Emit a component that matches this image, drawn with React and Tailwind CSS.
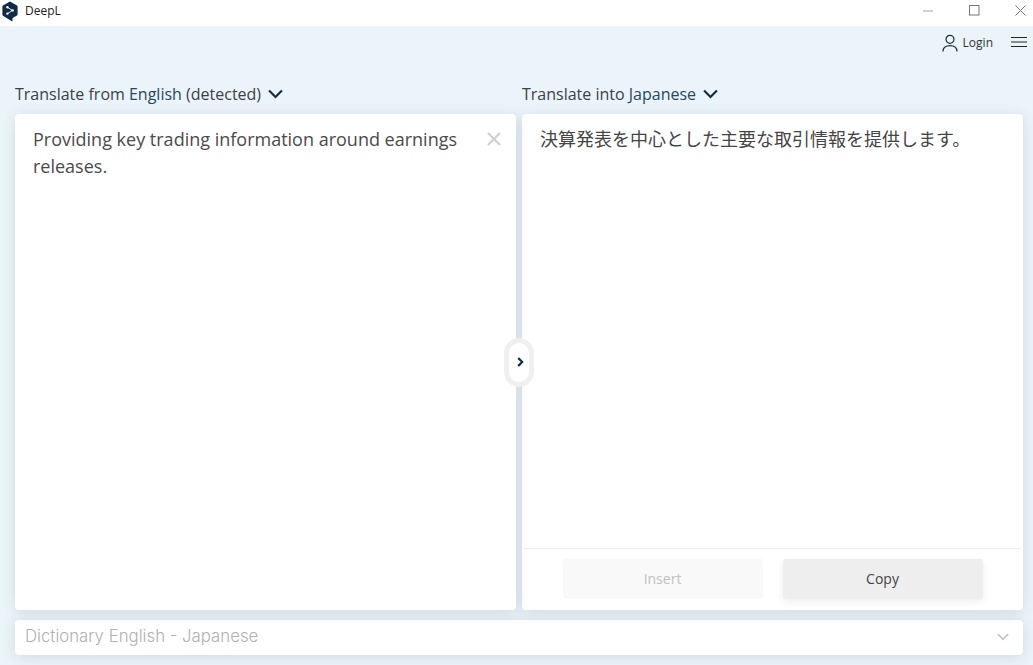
import React from "react";

const Chevron = ({ className = "" }) => (
  <svg className={className} viewBox="0 0 14 9" fill="none" stroke="currentColor" strokeWidth="2">
    <path d="M1 1.2 L7 7.2 L13 1.2" />
  </svg>
);

const Logo = () => (
  <svg width="16" height="21" viewBox="0 0 16 21" className="shrink-0 mt-[1px]">
    <path d="M8 0.5 L15 4.5 Q15.6 4.9 15.6 5.6 L15.6 13.2 Q15.6 14 15 14.4 L10.6 17 L10.4 20.6 L7 18.6 L1 14.8 Q0.4 14.4 0.4 13.6 L0.4 5.6 Q0.4 4.9 1 4.5 Z" fill="#0f2b46" />
    <circle cx="5.4" cy="6.3" r="1.2" fill="#fff" />
    <circle cx="5.4" cy="12.6" r="1.2" fill="#fff" />
    <circle cx="10.6" cy="9.4" r="1.2" fill="#fff" />
    <path d="M5.4 6.3 L10.6 9.4 L5.4 12.6" stroke="#fff" strokeWidth="0.9" fill="none" />
  </svg>
);

export default function App() {
  return (
    <div className="w-[1033px] h-[665px] overflow-hidden flex flex-col bg-[#ebf4fa] text-[#333] font-['Open_Sans',sans-serif]">
      <header className="h-[26px] bg-white flex items-start pl-[2px] shrink-0">
        <Logo />
        <span className="ml-[7px] mt-[5px] text-[12px] text-[#222] leading-none">DeepL</span>
        <div className="ml-auto mt-[5px] flex items-center text-[#8a8a8a]">
          <svg width="11" height="2" className="mr-[35px]"><path d="M0 1h10" stroke="#a8a8a8" strokeWidth="1" /></svg>
          <svg width="11" height="11" className="mr-[35px]"><rect x="0.5" y="0.5" width="9.5" height="9.5" fill="none" stroke="#777" /></svg>
          <svg width="11" height="11" className="mr-[7px]"><path d="M0.5 0.5L10.5 10.5M10.5 0.5L0.5 10.5" stroke="#777" /></svg>
        </div>
      </header>

      <div className="h-[34px] flex items-center justify-end shrink-0 pr-[6px]">
        <svg width="16" height="18" viewBox="0 0 16 18" fill="none" stroke="#1c2b3a" strokeWidth="1.2" className="mb-[1px]">
          <circle cx="8" cy="5.3" r="4" />
          <path d="M1 17.5 Q1 11.6 8 11.6 Q15 11.6 15 17.5" />
        </svg>
        <span className="ml-[5px] text-[12px] text-[#333] leading-none">Login</span>
        <svg width="16" height="12" className="ml-[18px] mb-[2px]" stroke="#222" strokeWidth="1.2">
          <path d="M0 1.5h16M0 6h16M0 10.5h16" />
        </svg>
      </div>

      <div className="flex gap-[6px] pl-[15px] pr-[10px] shrink-0">
        <div className="w-[501px] h-[54px] flex items-center pt-[14px] pb-0 text-[16px] text-[#3b4148] leading-none">
          <span>Translate from&nbsp;</span>
          <span className="text-[#27475f]">English</span>
          <span>&nbsp;(detected)</span>
          <Chevron className="w-[15px] h-[10px] ml-[7px] text-[#0f2b46]" />
        </div>
        <div className="w-[501px] h-[54px] flex items-center pt-[14px] text-[16px] text-[#3b4148] leading-none">
          <span>Translate into&nbsp;</span>
          <span className="text-[#27475f]">Japanese</span>
          <Chevron className="w-[15px] h-[10px] ml-[7px] text-[#0f2b46]" />
        </div>
      </div>

      <main className="relative flex gap-[6px] pl-[15px] pr-[10px] h-[496px] shrink-0">
        <section className="relative w-[501px] bg-white rounded-[4px] shadow-[0_2px_14px_rgba(50,65,80,0.14)] pl-[18px] pr-[50px] pt-[12px] text-[18px] leading-[27px] text-[#4a4a4a]">
          Providing key trading information around earnings releases.
          <svg width="14" height="14" className="absolute right-[15px] top-[18px]" stroke="#cfcfcf" strokeWidth="2.2">
            <path d="M1 1L13 13M13 1L1 13" />
          </svg>
        </section>

        <section className="w-[501px] bg-white rounded-[4px] shadow-[0_2px_14px_rgba(50,65,80,0.14)] flex flex-col">
          <div className="flex-1 pl-[18px] pt-[11px] text-[18px] leading-[27px] text-[#444] font-['Noto_Sans_CJK_JP',sans-serif]">
            決算発表を中心とした主要な取引情報を提供します。
          </div>
          <div className="mx-[2px] border-t border-[#eeeeee] h-[62px] flex items-start justify-center gap-[20px] pt-[10px] text-[14px]">
            <div className="w-[200px] h-[40px] pb-[2px] rounded-[3px] bg-[#f9f9f9] text-[#c0c0c0] flex items-center justify-center">Insert</div>
            <div className="w-[200px] h-[40px] pb-[2px] rounded-[3px] bg-[#eeeeee] text-[#444] shadow-[0_3px_8px_rgba(0,0,0,0.07)] flex items-center justify-center">Copy</div>
          </div>
        </section>

        <button className="absolute left-[504px] top-[224px] w-[30px] h-[49px] pb-[2px] pl-[2px] rounded-full bg-white border-[5px] border-[#f0f0f0] flex items-center justify-center">
          <svg width="7" height="10" viewBox="0 0 7 10" fill="none" stroke="#0f2b46" strokeWidth="2.2">
            <path d="M1.2 1L5.2 5L1.2 9" />
          </svg>
        </button>
      </main>

      <div className="ml-[15px] mr-[10px] mt-[10px] h-[35px] shrink-0 bg-white rounded-[4px] shadow-[0_2px_14px_rgba(50,65,80,0.14)] flex items-center pl-[10px] pr-[14px] pb-[1px] text-[16.8px] text-[#b0b0b0] font-['Inter',sans-serif] font-light">
        <span className="flex-1">Dictionary English - Japanese</span>
        <Chevron className="w-[12px] h-[8px] text-[#c4c4c4]" />
      </div>
    </div>
  );
}
